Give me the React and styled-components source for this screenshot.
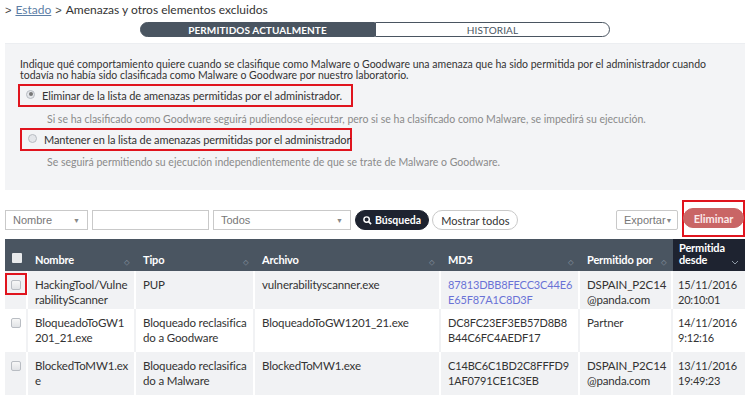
import React from "react";
import styled, { createGlobalStyle } from "styled-components";

const Global = createGlobalStyle`
  html, body { margin: 0; padding: 0; background: #fff; }
  body { font-family: Lato, "Open Sans", sans-serif; color: #333; }
  * { box-sizing: border-box; }
`;

const Page = styled.div`
  width: 755px;
  padding: 0 10px 0 5px;
`;

const Crumb = styled.div`
  font-size: 12px;
  color: #333;
  height: 17px;
  padding-top: 2px;
  display: flex;
  align-items: baseline;
  white-space: pre;
`;

const Gt = styled.span`
  font-family: "Liberation Sans", Arial, sans-serif;
  font-size: 11px;
  color: #444;
  margin: 0 4px 0 ${p => p.$ml || 0}px;
`;

const CrumbLink = styled.a`
  color: #5c7ea6;
  text-decoration: underline;
`;

const Tabs = styled.div`
  display: flex;
  width: 470px;
  margin: 5px auto 0;
  height: 15px;
`;

const Tab = styled.div`
  flex: 1;
  display: flex;
  align-items: center;
  justify-content: center;
  font-size: 10px;
  font-weight: ${p => (p.$active ? 700 : 400)};
  letter-spacing: 0.1px;
  color: ${p => (p.$active ? "#fff" : "#4a5561")};
  background: ${p => (p.$active ? "#4a5561" : "#fff")};
  border: 1px solid #4a5561;
  border-radius: ${p => (p.$active ? "8px 0 0 8px" : "0 8px 8px 0")};
`;

const Rule = styled.div`
  height: 1px;
  background: #eceef1;
  margin-top: 6px;
`;

const Panel = styled.div`
  background: #f3f4f6;
  padding: 15px 8px 16px 15px;
  min-height: 146px;
`;

const Intro = styled.p`
  margin: 0;
  font-size: 10.5px;
  line-height: 11px;
  color: #333;
`;

const OptionBox = styled.label`
  display: flex;
  align-items: center;
  gap: 7px;
  margin-left: ${p => p.$ml}px;
  width: ${p => p.$w}px;
  height: 23px;
  border: 2.5px solid #e0141e;
  padding-left: 6px;
  font-size: 11px;
  letter-spacing: -0.1px;
  white-space: nowrap;
  color: #333;
  margin-top: ${p => p.$mt}px;
`;

const Radio = styled.span`
  width: 9px;
  height: 9px;
  flex: none;
  border-radius: 50%;
  border: 1px solid #b8bcc2;
  background: #e4e6ea;
  display: inline-flex;
  align-items: center;
  justify-content: center;
  margin-top: -3px;
  &::after {
    content: "";
    width: 4px;
    height: 4px;
    border-radius: 50%;
    background: ${p => (p.$checked ? "#777" : "transparent")};
  }
`;

const Hint = styled.div`
  font-size: 10.5px;
  color: #8a8a8a;
  margin: ${p => p.$mt}px 0 0 27px;
`;

const Toolbar = styled.div`
  display: flex;
  align-items: center;
  margin-top: 19px;
  height: 22px;
`;

const Select = styled.div`
  width: ${p => p.$w}px;
  height: 20px;
  border: 1px solid #c9c9c9;
  background: #fff;
  display: flex;
  align-items: center;
  justify-content: space-between;
  padding: 0 7px;
  margin-right: 4px;
  font-size: 11px;
  color: ${p => p.$color || "#777"};
  border-radius: ${p => p.$r || 0}px;
  font-family: "Liberation Sans", Arial, sans-serif;
`;

const Caret = styled.span`
  font-size: 7px;
  color: #888;
`;

const Input = styled.div`
  width: 117px;
  height: 20px;
  border: 1px solid #c9c9c9;
  margin-right: 4px;
`;

const Pill = styled.button`
  height: 20px;
  border-radius: 10px;
  font-family: inherit;
  font-size: ${p => p.$fs || 11}px;
  padding: 0 ${p => p.$px || 10}px;
  display: inline-flex;
  align-items: center;
  gap: 3px;
  cursor: pointer;
  font-weight: ${p => (p.$bold ? 700 : 400)};
  color: ${p => p.$fg};
  background: ${p => p.$bg};
  border: 1px solid ${p => p.$bd || p.$bg};
  margin-right: ${p => (p.$mr === undefined ? 3 : p.$mr)}px;
`;

const Spacer = styled.div`
  flex: 1;
`;

const RedFrame = styled.div`
  border: 2.5px solid #e0141e;
  width: 63px;
  height: 37px;
  display: flex;
  align-items: center;
  justify-content: center;
  margin-top: -4px;
`;

const Table = styled.div`
  margin-top: 8px;
  display: grid;
  grid-template-columns: 23px 108px 119px 186px 139px 93px 72px;
  font-size: 11.5px;
  letter-spacing: -0.15px;
`;

const Th = styled.div`
  background: ${p => (p.$dark ? "#1e2330" : "#4a5561")};
  color: #fff;
  font-weight: 700;
  font-size: 11px;
  height: 32px;
  display: flex;
  align-items: ${p => (p.$dark ? "center" : "flex-end")};
  justify-content: space-between;
  padding: ${p => (p.$dark ? "0 6px 3px 6px" : "0 6px 5px 7px")};
  line-height: 12px;
`;

const Sort = styled.span`
  color: #8c97a3;
  font-size: 8px;
  font-weight: 400;
  margin-bottom: -2px;
  align-self: flex-end;
`;

const Chevron = styled.svg`
  align-self: flex-end;
  margin-bottom: 3px;
  flex: none;
`;

const Td = styled.div`
  background: ${p => (p.$alt ? "#f1f2f4" : "#fff")};
  border-right: 2px solid ${p => (p.$alt ? "#fff" : "#f1f2f4")};
  padding: 6px 4px 6px 7px;
  line-height: 15px;
  color: ${p => p.$color || "#333"};
  height: ${p => p.$h}px;
  word-break: break-all;
  font-size: ${p => p.$fs || 11.5}px;
`;

const DateTd = styled(Td)`
  border-right: none;
  padding: 6px 1px 6px 5px;
  font-size: 11px;
  letter-spacing: -0.2px;
  word-break: normal;
  white-space: nowrap;
`;

const CheckCell = styled(Td)`
  padding: 6px 0 0 6px;
  position: relative;
`;

const Box = styled.span`
  display: block;
  width: 10px;
  height: 10px;
  border: 1px solid #b9bdc3;
  border-radius: 2px;
  background: linear-gradient(#f7f7f7, #e1e3e6);
  margin-top: 3px;
`;

const HeadBox = styled.span`
  display: block;
  width: 10px;
  height: 10px;
  background: #e8eaec;
  border-radius: 1px;
  margin-bottom: 3px;
`;

const CheckMark = styled.div`
  position: absolute;
  left: 0;
  top: 2px;
  width: 22px;
  height: 22px;
  border: 2.5px solid #e0141e;
`;

const rows = [
  {
    nombre: "HackingTool/VulnerabilityScanner",
    tipo: "PUP",
    archivo: "vulnerabilityscanner.exe",
    md5: "87813DBB8FECC3C44E6E65F87A1C8D3F",
    por: "DSPAIN_P2C14@panda.com",
    desde: ["15/11/2016", "20:10:01"],
    link: true,
    mark: true,
    h: 38,
  },
  {
    nombre: "BloqueadoToGW1201_21.exe",
    tipo: "Bloqueado reclasificado a Goodware",
    archivo: "BloqueadoToGW1201_21.exe",
    md5: "DC8FC23EF3EB57D8B8B44C6FC4AEDF17",
    por: "Partner",
    desde: ["14/11/2016", "9:12:16"],
    h: 43,
  },
  {
    nombre: "BlockedToMW1.exe",
    tipo: "Bloqueado reclasificado a Malware",
    archivo: "BlockedToMW1.exe",
    md5: "C14BC6C1BD2C8FFFD91AF0791CE1C3EB",
    por: "DSPAIN_P2C14@panda.com",
    desde: ["13/11/2016", "19:49:23"],
    h: 43,
  },
];

const SortIcon = () => <Sort>⬦</Sort>;

export default function App() {
  return (
    <Page>
      <Global />
      <Crumb>
        <Gt>&gt;</Gt>
        <CrumbLink>Estado</CrumbLink>
        <Gt $ml={4}>&gt;</Gt>
        Amenazas y otros elementos excluidos
      </Crumb>
      <Tabs>
        <Tab $active>PERMITIDOS ACTUALMENTE</Tab>
        <Tab>HISTORIAL</Tab>
      </Tabs>
      <Rule />
      <Panel>
        <Intro>
          Indique qué comportamiento quiere cuando se clasifique como Malware o Goodware una amenaza que ha sido permitida por el administrador cuando todavía no había sido clasificada como Malware o Goodware por nuestro laboratorio.
        </Intro>
        <OptionBox $w={335} $mt={3} $ml={-2}>
          <Radio $checked />
          Eliminar de la lista de amenazas permitidas por el administrador.
        </OptionBox>
        <Hint $mt={6}>Si se ha clasificado como Goodware seguirá pudiendose ejecutar, pero si se ha clasificado como Malware, se impedirá su ejecución.</Hint>
        <OptionBox $w={332} $mt={3} $ml={0}>
          <Radio />
          Mantener en la lista de amenazas permitidas por el administrador
        </OptionBox>
        <Hint $mt={5}>Se seguirá permitiendo su ejecución independientemente de que se trate de Malware o Goodware.</Hint>
      </Panel>
      <Toolbar>
        <Select $w={83}>Nombre<Caret>▼</Caret></Select>
        <Input />
        <Select $w={138}>Todos<Caret>▼</Caret></Select>
        <Pill $bg="#1e2330" $fg="#fff" $bold $px={7} $fs={10.5}>
          <svg width="9" height="9" viewBox="0 0 10 10">
            <circle cx="4" cy="4" r="3" fill="none" stroke="#fff" strokeWidth="1.6" />
            <line x1="6.2" y1="6.2" x2="9" y2="9" stroke="#fff" strokeWidth="1.8" />
          </svg>
          Búsqueda
        </Pill>
        <Pill $bg="#fff" $fg="#333" $bd="#c9c9c9" $px={8}>Mostrar todos</Pill>
        <Spacer />
        <Select $w={62} $color="#777" $r={2}>Exportar<Caret>▼</Caret></Select>
        <RedFrame>
          <Pill $bg="#c96565" $fg="#fbe9e9" $bold $px={10} $mr={0}>Eliminar</Pill>
        </RedFrame>
      </Toolbar>
      <Table>
        <Th><HeadBox /></Th>
        <Th>Nombre<SortIcon /></Th>
        <Th>Tipo<SortIcon /></Th>
        <Th>Archivo<SortIcon /></Th>
        <Th>MD5<SortIcon /></Th>
        <Th>Permitido por<SortIcon /></Th>
        <Th $dark>
          <span>Permitida<br />desde</span>
          <Chevron width="8" height="5" viewBox="0 0 8 5">
            <polyline points="1,1 4,4 7,1" fill="none" stroke="#8c97a3" strokeWidth="1" />
          </Chevron>
        </Th>
        {rows.map((r, i) => {
          const alt = i % 2 === 0;
          return (
            <React.Fragment key={i}>
              <CheckCell $alt={alt} $h={r.h}>
                <Box />
                {r.mark && <CheckMark />}
              </CheckCell>
              <Td $alt={alt} $h={r.h}>{r.nombre}</Td>
              <Td $alt={alt} $h={r.h}>{r.tipo}</Td>
              <Td $alt={alt} $h={r.h}>{r.archivo}</Td>
              <Td $alt={alt} $h={r.h} $fs={11} $color={r.link ? "#6a72d6" : "#333"}>{r.md5}</Td>
              <Td $alt={alt} $h={r.h}>{r.por}</Td>
              <DateTd $alt={alt} $h={r.h}>{r.desde[0]}<br />{r.desde[1]}</DateTd>
            </React.Fragment>
          );
        })}
      </Table>
    </Page>
  );
}
